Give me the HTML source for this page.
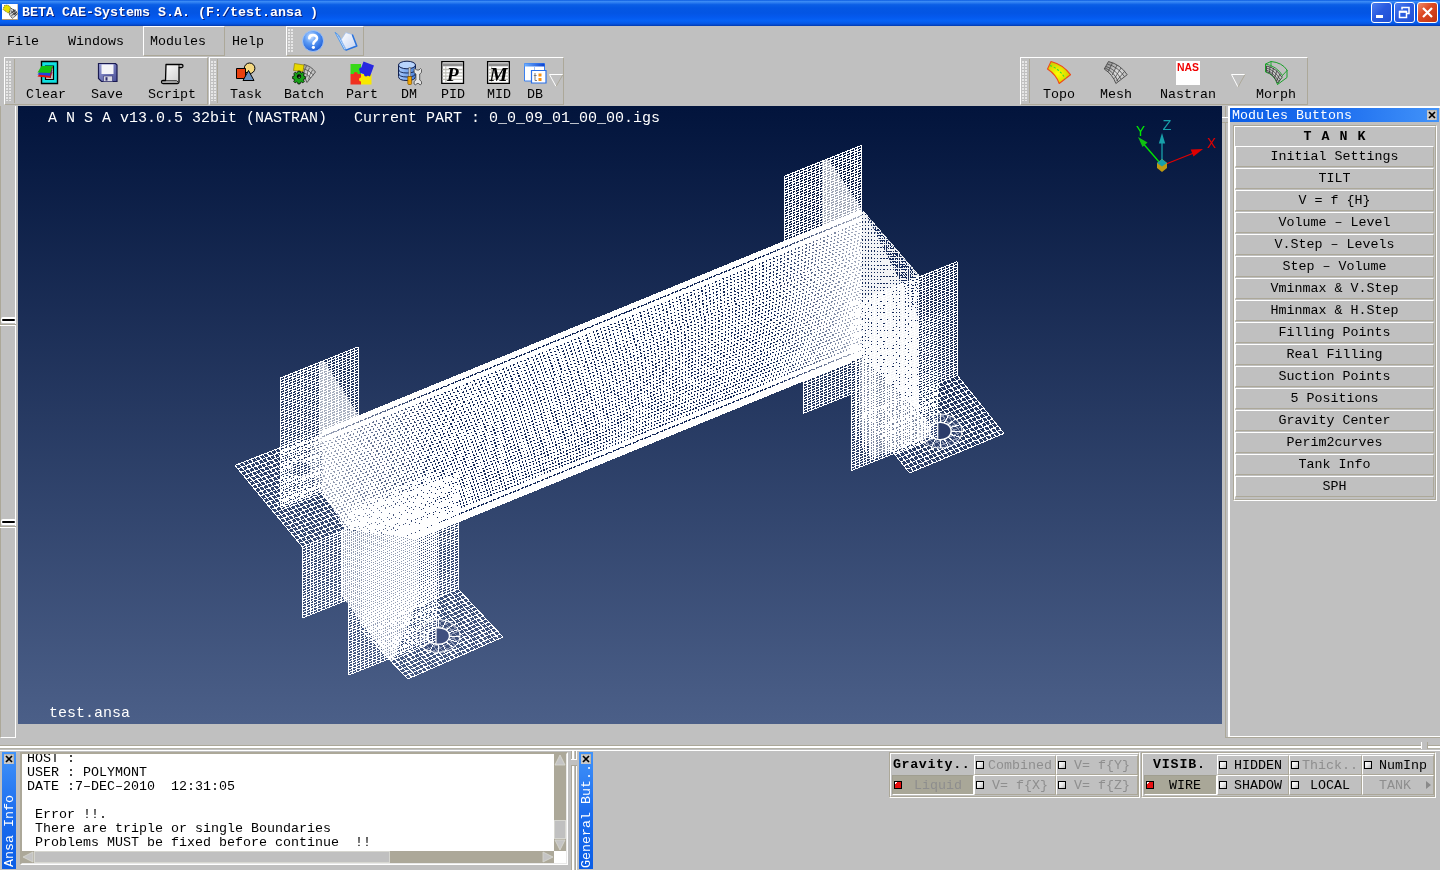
<!DOCTYPE html>
<html>
<head>
<meta charset="utf-8">
<title>BETA CAE-Systems S.A.</title>
<style>
*{box-sizing:border-box;margin:0;padding:0}
html,body{width:1440px;height:870px;overflow:hidden;background:#c0c0c0}
body{position:relative;font-family:"Liberation Mono",monospace;font-size:13.33px;color:#000;line-height:16px}
.abs{position:absolute}
.t{position:absolute;white-space:pre;line-height:16px;height:16px}
/* title bar */
#title{left:0;top:0;width:1440px;height:26px;background:linear-gradient(to bottom,#0a5be0 0%,#3c8cf6 6%,#2c7df0 10%,#0b5fe6 18%,#0457e3 30%,#0355e4 50%,#0459ee 66%,#0562f6 80%,#0558e6 90%,#0348cc 96%,#0238a8 100%)}
#title .cap{left:22px;top:5px;color:#fff;font-weight:bold;font-size:13.33px;text-shadow:1px 1px 0 #0a1f7a}
.wb{position:absolute;top:2px;width:21px;height:21px;border:1px solid #fff;border-radius:3px;background:linear-gradient(135deg,#4d7ff0 0%,#2a5be0 45%,#1f4fd4 100%)}
.wb.close{background:linear-gradient(135deg,#ee8a6a 0%,#dd4a24 40%,#c03312 100%)}
/* bevels */
.raised{border:1px solid;border-color:#fff #aca899 #aca899 #fff}
.sunken{border:1px solid;border-color:#aca899 #fff #fff #aca899}
.grip{position:absolute;width:6px;background-image:radial-gradient(circle at 1px 1px,rgba(255,255,255,.85) 0.6px,transparent 1.0px);background-size:3px 3px}
.tl{position:absolute;white-space:pre;line-height:16px;height:16px;text-align:center}
/* viewport */
#vp{left:18px;top:106px;width:1204px;height:618px;background:linear-gradient(to bottom,#02143c 0%,#4b5f88 100%);overflow:hidden}
#vp .vt{position:absolute;color:#fff;font-size:15px;white-space:pre;line-height:16px}
/* module panel */
.mb{position:absolute;left:1235px;width:199px;height:21px;border:1px solid;border-color:#fff #aca899 #aca899 #fff;text-align:center;line-height:20px;white-space:pre}
.cell{position:absolute;height:20px;border:1px solid;border-color:#fff #aca899 #aca899 #fff;white-space:pre;line-height:18px}
.cb{position:absolute;width:8px;height:8px;border:1px solid #000;background:linear-gradient(135deg,#fff 0%,#e8e8e8 50%,#b8b8b8 100%)}
.cb.red{background:linear-gradient(135deg,#fff 0%,#fff 22%,#e81010 24%,#e81010 100%)}
.dis{color:#8e8e8e}
</style>
</head>
<body>
<div id="root" style="position:absolute;left:0;top:0;width:1440px;height:870px;will-change:transform">
<!-- TITLE BAR -->
<div id="title" class="abs">
  <svg class="abs" style="left:2px;top:4px" width="16" height="16" viewBox="0 0 16 16"><rect width="16" height="16" fill="#fff"/><path d="M0 15.500h16v-15.500" fill="none" stroke="#b09878" stroke-width="1"/>
<path d="M7.500 3.500l6 3 2 3.500-5 4.500-3-3.500z" fill="#d0d0d0" stroke="#202020" stroke-width="0.800" stroke-dasharray="1.200 0.600"/>
<path d="M9 6.500l4.500 5M11 5.500l3.500 5.500M8.500 9.500l5-3.500M9.500 11.500l5.500-3.500" stroke="#202020" stroke-width="0.800" fill="none"/>
<path d="M2.500 1.500l3-.5 3 2-1 5.500-1.500.5-5-3.500z" fill="#e8e000" stroke="#303000" stroke-width="0.600" stroke-dasharray="1 0.800"/></svg>
  <div class="t cap">BETA CAE-Systems S.A. (F:/test.ansa )</div>
  <div class="wb" style="left:1371px"><div class="abs" style="left:4px;top:12px;width:7px;height:3px;background:#fff"></div></div>
  <div class="wb" style="left:1394px"><svg class="abs" style="left:0;top:0" width="19" height="19"><path d="M7 6.500v-2h7v6h-2" fill="none" stroke="#fff" stroke-width="1.500"/><path d="M4.500 8.500h7v6h-7z" fill="none" stroke="#fff" stroke-width="1.500"/><path d="M4.500 8.800h7" stroke="#fff" stroke-width="2"/></svg></div>
  <div class="wb close" style="left:1417px"><svg class="abs" style="left:0;top:0" width="19" height="19"><path d="M5 5l9 9M14 5l-9 9" stroke="#fff" stroke-width="2.200"/></svg></div>
</div>

<!-- MENU -->
<div class="t" style="left:7px;top:34px">File</div>
<div class="t" style="left:68px;top:34px">Windows</div>
<div class="abs raised" style="left:143px;top:26px;width:82px;height:30px"></div>
<div class="t" style="left:150px;top:34px">Modules</div>
<div class="t" style="left:232px;top:34px">Help</div>


<!-- help toolbar -->
<div class="abs raised" style="left:286px;top:26px;width:78px;height:30px"></div>
<div class="grip" style="left:288px;top:29px;height:24px"></div>
<svg class="abs" style="left:300px;top:29px" width="26" height="24" viewBox="0 0 26 24">
  <defs><radialGradient id="hg" cx="40%" cy="30%" r="70%"><stop offset="0" stop-color="#cfe3ff"/><stop offset="0.45" stop-color="#5b9bf5"/><stop offset="1" stop-color="#1f5fd8"/></radialGradient></defs>
  <circle cx="13" cy="12" r="10.5" fill="url(#hg)" stroke="#9cc0f4" stroke-width="1"/>
  <path d="M9.3 9.2 C9.3 5.2 17 5 17 9.3 C17 12 13.4 12 13.4 14.8" fill="none" stroke="#fff" stroke-width="2.6" stroke-linecap="round"/>
  <circle cx="13.4" cy="18.3" r="1.6" fill="#fff"/>
</svg>
<svg class="abs" style="left:330px;top:28px" width="32" height="26" viewBox="330 28 32 26">
  <defs><linearGradient id="bk" x1="0" y1="0" x2="1" y2="1"><stop offset="0" stop-color="#ffffff"/><stop offset="1" stop-color="#c4d2f0"/></linearGradient></defs>
  <path d="M335 32.300L344.300 49.800L346 49.300L338.500 35z" fill="#b8d4fa" stroke="#4a94ea" stroke-width="0.900"/>
  <path d="M338 36L341.500 39.500L346 49.500" fill="none" stroke="#7ab0f0" stroke-width="0.800"/>
  <path d="M341.300 39.500L345.800 32.600L352.300 34.600L356.300 45.800L346.300 49.600L342.500 42.500z" fill="url(#bk)" stroke="#9abcf0" stroke-width="0.700"/>
  <path d="M352.300 34.400L356.800 46L345.500 50.400" fill="none" stroke="#2a72dc" stroke-width="1.500" stroke-linejoin="round"/>
</svg>

<!-- toolbar 1 -->
<div class="abs raised" style="left:4px;top:57px;width:204px;height:48px"></div>
<div class="grip" style="left:6px;top:61px;height:40px"></div>
<div class="abs" style="left:14px;top:59px;width:1px;height:44px;background:#aca899"></div>
<div class="tl" style="top:87px;left:22px;width:48px">Clear</div>
<div class="tl" style="top:87px;left:87px;width:40px">Save</div>
<div class="tl" style="top:87px;left:144px;width:56px">Script</div>

<!-- toolbar 2 -->
<div class="abs raised" style="left:209px;top:57px;width:355px;height:48px"></div>
<div class="grip" style="left:211px;top:61px;height:40px"></div>
<div class="abs" style="left:217px;top:59px;width:1px;height:44px;background:#aca899"></div>
<div class="tl" style="top:87px;left:230px;width:32px">Task</div>
<div class="tl" style="top:87px;left:284px;width:40px">Batch</div>
<div class="tl" style="top:87px;left:346px;width:32px">Part</div>
<div class="tl" style="top:87px;left:401px;width:16px">DM</div>
<div class="tl" style="top:87px;left:441px;width:24px">PID</div>
<div class="tl" style="top:87px;left:487px;width:24px">MID</div>
<div class="tl" style="top:87px;left:527px;width:16px">DB</div>

<!-- toolbar 3 -->
<div class="abs raised" style="left:1020px;top:57px;width:288px;height:48px"></div>
<div class="grip" style="left:1022px;top:61px;height:40px"></div>
<div class="abs" style="left:1029px;top:59px;width:1px;height:44px;background:#aca899"></div>
<div class="tl" style="top:87px;left:1043px;width:32px">Topo</div>
<div class="tl" style="top:87px;left:1100px;width:32px">Mesh</div>
<div class="tl" style="top:87px;left:1160px;width:56px">Nastran</div>
<div class="tl" style="top:87px;left:1256px;width:40px">Morph</div>

<!--ICONS--><svg class="abs" style="left:0;top:57px" width="1440" height="48" viewBox="0 57 1440 48">
<defs>
<linearGradient id="gsave" x1="0" y1="0" x2="1" y2="1"><stop offset="0" stop-color="#9aa0d8"/><stop offset="1" stop-color="#4a4f98"/></linearGradient>
<linearGradient id="gscr" x1="0" y1="0" x2="1" y2="1"><stop offset="0" stop-color="#ffffff"/><stop offset="1" stop-color="#c8c8c8"/></linearGradient>
<radialGradient id="gtopo" cx="45%" cy="55%" r="60%"><stop offset="0" stop-color="#ffff00"/><stop offset="1" stop-color="#c8c800"/></radialGradient>
<radialGradient id="gmesh" cx="60%" cy="55%" r="60%"><stop offset="0" stop-color="#e8e8e8"/><stop offset="1" stop-color="#9c9c9c"/></radialGradient>
<linearGradient id="gdb" x1="0" y1="0" x2="1" y2="0"><stop offset="0" stop-color="#a8c8f8"/><stop offset="0.5" stop-color="#7aa8ee"/><stop offset="1" stop-color="#4a80d8"/></linearGradient>
<linearGradient id="gwin" x1="0" y1="0" x2="1" y2="0"><stop offset="0" stop-color="#6fb0ff"/><stop offset="1" stop-color="#0a40d0"/></linearGradient>
</defs>
<!-- Clear -->
<path d="M41.5 61.5h16v22h-16z" fill="#10e0e0" stroke="#000" stroke-width="1.4"/>
<path d="M45.5 66h8v13.5h-8z" fill="#c0c0c0" stroke="#000" stroke-width="1.2"/>
<path d="M37.5 76.5l3.5-4.5h11.5l-2 6z" fill="#e01010"/>
<path d="M37.5 74.5l3.5-4.5h11.5l-2 6z" fill="#2040e0"/>
<path d="M37.5 72.5l4-6.5h11.5l-2.5 7z" fill="#10c010"/>
<path d="M52.5 67l-2 7v4" fill="none" stroke="#802020" stroke-width="0.8"/>
<!-- Save -->
<path d="M98.5 63.5h17l1.5 1.5v16.5h-15.5l-3-3z" fill="url(#gsave)" stroke="#1a1a50" stroke-width="1.2"/>
<path d="M101.5 64.5h12v9.5h-12z" fill="#f4f4f8"/>
<path d="M103.5 76h9v5.5h-9z" fill="#d8d8e4" stroke="#303070" stroke-width="0.6"/>
<path d="M105.5 77.2h2v3.4h-2z" fill="#303070"/>
<!-- Script -->
<path d="M166 64.5h15.5q1.5 0 1.5 1.5t-1.5 1.5h-2.5v14.5q0 1.5-1.500 1.500h-14.500q-1.5 0-1.5-1.500t1.500-1.500h2.500z" fill="url(#gscr)" stroke="#000" stroke-width="1.3" stroke-linejoin="round"/>
<path d="M163 80.800h13.500q1 0 1.500 1.500" fill="none" stroke="#000" stroke-width="0.9"/>
<path d="M179 67.500v-3" stroke="#000" stroke-width="0.9"/>
<!-- Task -->
<circle cx="249.600" cy="68.300" r="5.300" fill="#f4d880" stroke="#000" stroke-width="1"/>
<path d="M236.500 68.500h9v10h-9z" fill="#e84010" stroke="#000" stroke-width="1"/>
<path d="M248.500 70.500l5.500 10h-11z" fill="#6890c0" stroke="#000" stroke-width="1"/>
<!-- Batch -->
<path d="M304 64.500q7 1.500 11.500 7.500l-8.500 10.500q-2-7-7-10z" fill="url(#gmesh)" stroke="#505050" stroke-width="0.900"/>
<path d="M306.500 66q-2.500 4-3 8.500M309.500 67.800q-2.500 4-2.700 9.500M312.500 70q-3 4.500-4 9.500M303 68.500q6 1.500 10.500 6.500M302 72q5 1.500 9 6" fill="none" stroke="#505050" stroke-width="0.800"/>
<path d="M294.500 63.500l9.500 1.500-1 6.500-9.500-1z" fill="#e8d800" stroke="#807000" stroke-width="0.600"/>
<g transform="translate(299 76.500) scale(0.82)">
<path d="M-1.300-6.500h2.600l.4 1.700 1.500.6 1.500-1 1.800 1.800-1 1.500.6 1.500 1.700.4v2.600l-1.700.4-.6 1.500 1 1.500-1.800 1.800-1.500-1-1.500.6-.4 1.700h-2.600l-.4-1.700-1.500-.6-1.500 1-1.800-1.800 1-1.500-.6-1.500-1.700-.4v-2.600l1.700-.4.600-1.500-1-1.500 1.800-1.800 1.500 1 1.500-.6z" fill="#18a018" stroke="#000" stroke-width="0.900"/>
<circle r="2.600" fill="#000"/><circle r="1.200" cx="0.300" cy="0.300" fill="#d0ffd0"/><circle r="1.100" fill="#000"/>
</g>
<!-- Part -->
<path d="M350.500 64h10.500v10h-10.500z" fill="#38d818"/>
<path d="M350.500 74h10.500v10.500h-10.500z" fill="#f03020"/>
<path d="M361 74h10.500v10.500h-10.500z" fill="#f8e800"/>
<circle cx="355.700" cy="74" r="2" fill="#f03020"/><circle cx="361" cy="79.500" r="2" fill="#f8e800"/><circle cx="366" cy="74.500" r="2" fill="#2828e0"/>
<path d="M363.500 61.500l10.500 4-4 11-10.500-4z" fill="#2828e0"/>
<circle cx="361" cy="69.500" r="1.900" fill="#2828e0"/>
<!-- DM -->
<path d="M398.500 65v11.500q0 4 8.500 4t8.500-4v-11.500z" fill="url(#gdb)" stroke="#102050" stroke-width="1"/>
<ellipse cx="407" cy="65" rx="8.500" ry="3.800" fill="#b8d4fc" stroke="#102050" stroke-width="1"/>
<path d="M398.500 69q0 4 8.500 4t8.500-4M398.500 73q0 4 8.500 4t8.500-4" fill="none" stroke="#102050" stroke-width="0.900"/>
<path d="M408.800 67.500h1.800v9h-1.800z" fill="#d8d8d8" stroke="#606060" stroke-width="0.600"/>
<path d="M407.800 76.500h3.800v7q0 1-1 1h-1.800q-1 0-1-1z" fill="#f0a800" stroke="#805000" stroke-width="0.700"/>
<path d="M415 68.500l1.500 1.500h2.500l1.500-1.500 1 1v3l-1.800 1.500v6l1.800 1.500v2.500l-1.500 1-1.200-1.500h-2l-1.200 1.500-1.500-1v-2.500l1.800-1.500v-6l-1.800-1.500v-3z" fill="#e4e4e4" stroke="#505050" stroke-width="0.900"/>
<!-- PID -->
<path d="M441.800 61.600h21.700v21.700h-21.700z" fill="#fff" stroke="#000" stroke-width="1.300"/>
<path d="M442.500 63.300h20.300v3h-20.300z" fill="#8c8c8c"/>
<path d="M442.500 69.500h20.300M442.500 72.800h20.300M442.500 76.100h20.300M442.500 79.400h20.300" stroke="#c0c0b8" stroke-width="1.300"/>
<path d="M445.800 66.300v16.500" stroke="#c0c0b8" stroke-width="1"/>
<text x="452.800" y="81.300" font-family="Liberation Serif" font-weight="bold" font-style="italic" font-size="19.500" text-anchor="middle" fill="#000">P</text>
<!-- MID -->
<path d="M487.600 61.600h21.700v21.700h-21.700z" fill="#fff" stroke="#000" stroke-width="1.300"/>
<path d="M488.300 63.300h20.300v3h-20.300z" fill="#8c8c8c"/>
<path d="M488.300 69.500h20.300M488.300 72.800h20.300M488.300 76.100h20.300M488.300 79.400h20.300" stroke="#c0c0b8" stroke-width="1.300"/>
<path d="M491.600 66.300v16.500" stroke="#c0c0b8" stroke-width="1"/>
<text x="498.600" y="81.300" font-family="Liberation Serif" font-weight="bold" font-style="italic" font-size="19" text-anchor="middle" fill="#000" textLength="18.500" lengthAdjust="spacingAndGlyphs">M</text>
<!-- DB -->
<path d="M524.500 63.500h20v17.500h-20z" fill="#fff" stroke="#3a80f0" stroke-width="1"/>
<path d="M524.500 63.500h20v3h-20z" fill="url(#gwin)"/>
<path d="M534.500 66.500v14" stroke="#9cc0f8" stroke-width="1"/>
<path d="M531.500 70.500h14.500v12.500h-14.500z" fill="#fff" stroke="#2a70e8" stroke-width="1.200"/>
<path d="M538.500 73.500h3v3h-3zM538.500 78h3v3h-3z" fill="#f89010"/>
<path d="M535 73v7.500h2M533.800 75.500h2.800" fill="none" stroke="#707070" stroke-width="0.900"/>
<!-- dropdown 1 -->
<path d="M563 74.500h-13.500l6.500 12" fill="none" stroke="#fff" stroke-width="1"/><path d="M556 86.500l7-12" fill="none" stroke="#aca899" stroke-width="1"/>
<!-- Topo -->
<path d="M1051 61.500q12 3 19.500 13.200l-11.300 8.800q-3.200-9-11.700-14.500z" fill="url(#gtopo)" stroke="#f04818" stroke-width="1.100" stroke-linejoin="round"/>
<path d="M1050 65.500q10 3.500 15.500 13.500" fill="none" stroke="#30e030" stroke-width="1.100" stroke-dasharray="2.200 1.800"/>
<!-- Mesh -->
<path d="M1108.500 61.500q12 3 18.700 13.200l-11.300 8.800q-3.200-9-11.700-14.500z" fill="url(#gmesh)" stroke="#484848" stroke-width="0.900" stroke-linejoin="round"/>
<path d="M1107.300 64q11 3 17 12.500M1106 66.500q10 3 15 12.500M1105 68q9 3.500 13 13.500M1112.500 62.800l-4.500 9M1117 65l-4.800 10M1121 68l-6.500 10.500M1124.500 71.500l-8 9.500" fill="none" stroke="#484848" stroke-width="0.800"/>
<!-- Nastran -->
<path d="M1176 61h24v24h-24z" fill="#fff"/>
<text x="1188" y="71" font-family="Liberation Sans" font-weight="bold" font-size="10.800" text-anchor="middle" fill="#f00000" textLength="22" lengthAdjust="spacingAndGlyphs">NAS</text>
<!-- dropdown 3 -->
<path d="M1245 74.500h-13.500l6.500 12.500" fill="none" stroke="#fff" stroke-width="1"/><path d="M1238 87l7-12.500" fill="none" stroke="#aca899" stroke-width="1"/>
<!-- Morph -->
<path d="M1265.500 64l5.500-2.500q11 1 16 8.500v7.500l-9.500 7q-3-10-12-12.500z" fill="none" stroke="#18a028" stroke-width="1"/>
<path d="M1265.500 64q11 2 17 11.500l5-5.500M1282.500 75.500l-5 9M1265.500 71.500l5.500-3v-7" fill="none" stroke="#18a028" stroke-width="0.900"/>
<path d="M1266.500 66q10 2 15.500 11.500l-4.500 5.500q-3.500-8.500-11-11.500z" fill="#c8c8c8" stroke="#303030" stroke-width="0.800"/>
<path d="M1266.500 68q9 2.500 13.500 11.500M1266.500 70q7.500 3 12 11M1270 66.800l-.5 6.200M1273.500 68l-1.500 7M1277 70.500l-2.500 7.500M1280 74l-3.500 7" fill="none" stroke="#303030" stroke-width="0.700"/>
</svg><!--/ICONS-->
<!-- VIEWPORT -->
<div id="vp" class="abs">
<!--MESH--><svg class="abs" style="left:0;top:0" width="1204" height="618" viewBox="18 106 1204 618" shape-rendering="crispEdges">
<defs><linearGradient id="gR" gradientUnits="userSpaceOnUse" x1="770" y1="0" x2="862" y2="0"><stop offset="0" stop-color="#fff" stop-opacity="0"/><stop offset="1" stop-color="#fff" stop-opacity="0.65"/></linearGradient><linearGradient id="gL" gradientUnits="userSpaceOnUse" x1="322" y1="0" x2="440" y2="0"><stop offset="0" stop-color="#fff" stop-opacity="0.6"/><stop offset="1" stop-color="#fff" stop-opacity="0"/></linearGradient><clipPath id="cbeam"><polygon points="322.0,430.4 862.0,209.0 862.0,357.5 417.6,539.1 346.0,529.0 322.0,492.0"/></clipPath><clipPath id="cend"><polygon points="862.0,209.0 919.0,275.0 919.0,412.0 862.0,357.0"/></clipPath><clipPath id="ctri"><polygon points="866.0,214.0 919.0,277.0 919.0,318.0"/></clipPath><clipPath id="ccl"><polygon points="342.0,529.0 417.6,539.1 417.6,601.0 394.0,658.0 391.0,662.0 349.4,606.0 342.0,596.0"/></clipPath><clipPath id="ccr"><polygon points="856.0,352.0 862.0,357.0 919.0,412.0 934.0,428.0 926.0,438.0 900.0,449.0 872.0,460.0 856.0,440.0"/></clipPath></defs>
<path d="M235.0 465.4l67.2 81.3M239.0 463.8l67.2 81.3M243.0 462.3l67.2 81.3M246.9 460.7l67.2 81.3M250.9 459.2l67.2 81.3M254.9 457.6l67.2 81.3M258.9 456.0l67.2 81.3M262.9 454.5l67.2 81.3M266.8 452.9l67.2 81.3M270.8 451.4l67.2 81.3M274.8 449.8l67.2 81.3M278.8 448.3l67.2 81.3M282.8 446.7l67.2 81.3M286.7 445.1l67.2 81.3M290.7 443.6l67.2 81.3M294.7 442.0l67.2 81.3M298.7 440.5l67.2 81.3M302.6 438.9l67.2 81.3M306.6 437.3l67.2 81.3M310.6 435.8l67.2 81.3M314.6 434.2l67.2 81.3M318.6 432.7l67.2 81.3M322.5 431.1l67.2 81.3M326.5 429.6l67.2 81.3M330.5 428.0l67.2 81.3M235.0 465.4l95.5 -37.4M237.8 468.8l95.5 -37.4M240.6 472.2l95.5 -37.4M243.4 475.6l95.5 -37.4M246.2 478.9l95.5 -37.4M249.0 482.3l95.5 -37.4M251.8 485.7l95.5 -37.4M254.6 489.1l95.5 -37.4M257.4 492.5l95.5 -37.4M260.2 495.9l95.5 -37.4M263.0 499.3l95.5 -37.4M265.8 502.7l95.5 -37.4M268.6 506.0l95.5 -37.4M271.4 509.4l95.5 -37.4M274.2 512.8l95.5 -37.4M277.0 516.2l95.5 -37.4M279.8 519.6l95.5 -37.4M282.6 523.0l95.5 -37.4M285.4 526.4l95.5 -37.4M288.2 529.8l95.5 -37.4M291.0 533.1l95.5 -37.4M293.8 536.5l95.5 -37.4M296.6 539.9l95.5 -37.4M299.4 543.3l95.5 -37.4M302.2 546.7l95.5 -37.4" fill="none" stroke="#fff" stroke-width="1"/>
<ellipse cx="301" cy="469" rx="10.5" ry="8" fill="#2d4069" stroke="#fff" stroke-width="1" shape-rendering="auto"/>
<path d="M280.5 378.0V508.0M284.4 376.4V506.4M288.3 374.9V504.9M292.2 373.3V503.3M296.1 371.8V501.8M300.0 370.2V500.2M303.9 368.7V498.7M307.8 367.1V497.1M311.7 365.5V495.5M315.6 364.0V494.0M319.4 362.4V492.4M323.3 360.9V490.9M327.2 359.3V489.3M331.1 357.7V487.7M335.0 356.2V486.2M338.9 354.6V484.6M342.8 353.1V483.1M346.7 351.5V481.5M350.6 350.0V480.0M354.5 348.4V478.4M358.4 346.8V476.8M280.5 378.0L358.4 346.8M280.5 380.6L358.4 349.4M280.5 383.2L358.4 352.0M280.5 385.8L358.4 354.6M280.5 388.4L358.4 357.2M280.5 391.0L358.4 359.8M280.5 393.6L358.4 362.4M280.5 396.2L358.4 365.0M280.5 398.8L358.4 367.6M280.5 401.4L358.4 370.2M280.5 404.0L358.4 372.8M280.5 406.6L358.4 375.4M280.5 409.2L358.4 378.0M280.5 411.8L358.4 380.6M280.5 414.4L358.4 383.2M280.5 417.0L358.4 385.8M280.5 419.6L358.4 388.4M280.5 422.2L358.4 391.0M280.5 424.8L358.4 393.6M280.5 427.4L358.4 396.2M280.5 430.0L358.4 398.8M280.5 432.6L358.4 401.4M280.5 435.2L358.4 404.0M280.5 437.8L358.4 406.6M280.5 440.4L358.4 409.2M280.5 443.0L358.4 411.8M280.5 445.6L358.4 414.4M280.5 448.2L358.4 417.0M280.5 450.8L358.4 419.6M280.5 453.4L358.4 422.2M280.5 456.0L358.4 424.8M280.5 458.6L358.4 427.4M280.5 461.2L358.4 430.0M280.5 463.8L358.4 432.6M280.5 466.4L358.4 435.2M280.5 469.0L358.4 437.8M280.5 471.6L358.4 440.4M280.5 474.2L358.4 443.0M280.5 476.8L358.4 445.6M280.5 479.4L358.4 448.2M280.5 482.0L358.4 450.8M280.5 484.6L358.4 453.4M280.5 487.2L358.4 456.0M280.5 489.8L358.4 458.6M280.5 492.4L358.4 461.2M280.5 495.0L358.4 463.8M280.5 497.6L358.4 466.4M280.5 500.2L358.4 469.0M280.5 502.8L358.4 471.6M280.5 505.4L358.4 474.2M280.5 508.0L358.4 476.8" fill="none" stroke="#fff" stroke-width="1"/>
<path d="M302.2 546.7V618.0M306.1 545.1V616.4M310.0 543.6V614.9M313.9 542.0V613.3M317.7 540.5V611.8M321.6 538.9V610.2M325.5 537.4V608.7M329.4 535.8V607.1M333.3 534.3V605.6M337.1 532.7V604.0M341.0 531.2V602.5M344.9 529.6V600.9M348.8 528.1V599.4M302.2 546.7L348.8 528.1M302.2 549.3L348.8 530.7M302.2 552.0L348.8 533.3M302.2 554.6L348.8 536.0M302.2 557.3L348.8 538.6M302.2 559.9L348.8 541.3M302.2 562.5L348.8 543.9M302.2 565.2L348.8 546.5M302.2 567.8L348.8 549.2M302.2 570.5L348.8 551.8M302.2 573.1L348.8 554.5M302.2 575.7L348.8 557.1M302.2 578.4L348.8 559.7M302.2 581.0L348.8 562.4M302.2 583.7L348.8 565.0M302.2 586.3L348.8 567.7M302.2 589.0L348.8 570.3M302.2 591.6L348.8 573.0M302.2 594.2L348.8 575.6M302.2 596.9L348.8 578.2M302.2 599.5L348.8 580.9M302.2 602.2L348.8 583.5M302.2 604.8L348.8 586.2M302.2 607.4L348.8 588.8M302.2 610.1L348.8 591.4M302.2 612.7L348.8 594.1M302.2 615.4L348.8 596.7M302.2 618.0L348.8 599.4" fill="none" stroke="#fff" stroke-width="1"/>
<polygon points="318.5,364.0 324.0,361.0 358.4,415.0 358.4,430.0 318.5,447.0" fill="#fff" opacity="0.6"/>
<path d="M784.3 176.3V306.3M788.2 174.8V304.8M792.0 173.2V303.2M795.9 171.7V301.6M799.8 170.1V300.1M803.7 168.6V298.6M807.5 167.0V297.0M811.4 165.5V295.5M815.3 163.9V293.9M819.2 162.4V292.4M823.0 160.8V290.8M826.9 159.2V289.2M830.8 157.7V287.7M834.7 156.2V286.1M838.5 154.6V284.6M842.4 153.1V283.1M846.3 151.5V281.5M850.2 150.0V280.0M854.0 148.4V278.4M857.9 146.9V276.9M861.8 145.3V275.3M784.3 176.3L861.8 145.3M784.3 178.9L861.8 147.9M784.3 181.5L861.8 150.5M784.3 184.1L861.8 153.1M784.3 186.7L861.8 155.7M784.3 189.3L861.8 158.3M784.3 191.9L861.8 160.9M784.3 194.5L861.8 163.5M784.3 197.1L861.8 166.1M784.3 199.7L861.8 168.7M784.3 202.3L861.8 171.3M784.3 204.9L861.8 173.9M784.3 207.5L861.8 176.5M784.3 210.1L861.8 179.1M784.3 212.7L861.8 181.7M784.3 215.3L861.8 184.3M784.3 217.9L861.8 186.9M784.3 220.5L861.8 189.5M784.3 223.1L861.8 192.1M784.3 225.7L861.8 194.7M784.3 228.3L861.8 197.3M784.3 230.9L861.8 199.9M784.3 233.5L861.8 202.5M784.3 236.1L861.8 205.1M784.3 238.7L861.8 207.7M784.3 241.3L861.8 210.3M784.3 243.9L861.8 212.9M784.3 246.5L861.8 215.5M784.3 249.1L861.8 218.1M784.3 251.7L861.8 220.7M784.3 254.3L861.8 223.3M784.3 256.9L861.8 225.9M784.3 259.5L861.8 228.5M784.3 262.1L861.8 231.1M784.3 264.7L861.8 233.7M784.3 267.3L861.8 236.3M784.3 269.9L861.8 238.9M784.3 272.5L861.8 241.5M784.3 275.1L861.8 244.1M784.3 277.7L861.8 246.7M784.3 280.3L861.8 249.3M784.3 282.9L861.8 251.9M784.3 285.5L861.8 254.5M784.3 288.1L861.8 257.1M784.3 290.7L861.8 259.7M784.3 293.3L861.8 262.3M784.3 295.9L861.8 264.9M784.3 298.5L861.8 267.5M784.3 301.1L861.8 270.1M784.3 303.7L861.8 272.7M784.3 306.3L861.8 275.3" fill="none" stroke="#fff" stroke-width="1"/>
<path d="M803.4 342.0V413.3M807.4 340.4V411.7M811.4 338.8V410.1M815.4 337.2V408.5M819.3 335.6V406.9M823.3 334.0V405.3M827.3 332.4V403.7M831.3 330.8V402.1M835.3 329.3V400.6M839.2 327.7V399.0M843.2 326.1V397.4M847.2 324.5V395.8M851.2 322.9V394.2M803.4 342.0L851.2 322.9M803.4 344.6L851.2 325.5M803.4 347.3L851.2 328.2M803.4 349.9L851.2 330.8M803.4 352.6L851.2 333.4M803.4 355.2L851.2 336.1M803.4 357.8L851.2 338.7M803.4 360.5L851.2 341.4M803.4 363.1L851.2 344.0M803.4 365.8L851.2 346.6M803.4 368.4L851.2 349.3M803.4 371.0L851.2 351.9M803.4 373.7L851.2 354.6M803.4 376.3L851.2 357.2M803.4 379.0L851.2 359.9M803.4 381.6L851.2 362.5M803.4 384.3L851.2 365.1M803.4 386.9L851.2 367.8M803.4 389.5L851.2 370.4M803.4 392.2L851.2 373.1M803.4 394.8L851.2 375.7M803.4 397.5L851.2 378.3M803.4 400.1L851.2 381.0M803.4 402.7L851.2 383.6M803.4 405.4L851.2 386.3M803.4 408.0L851.2 388.9M803.4 410.7L851.2 391.5M803.4 413.3L851.2 394.2" fill="none" stroke="#fff" stroke-width="1"/>
<polygon points="822.0,162.0 828.0,159.0 861.8,209.0 861.8,225.0 822.0,240.0" fill="#fff" opacity="0.6"/>
<polygon points="322.0,430.4 862.0,209.0 862.0,357.5 417.6,539.1 346.0,529.0 322.0,492.0" fill="#fff" />
<path d="M322 443.4L862 222.0" stroke="#152a5a" stroke-width="1.45" stroke-dasharray="1.50 2.40" stroke-dashoffset="0.0" fill="none" clip-path="url(#cbeam)"/>
<path d="M322 446.7L862 225.4" stroke="#152a5a" stroke-width="1.45" stroke-dasharray="1.50 2.38" stroke-dashoffset="1.4" fill="none" clip-path="url(#cbeam)"/>
<path d="M322 450.1L862 228.7" stroke="#152a5a" stroke-width="1.45" stroke-dasharray="1.50 2.36" stroke-dashoffset="2.7" fill="none" clip-path="url(#cbeam)"/>
<path d="M322 453.4L862 232.1" stroke="#152a5a" stroke-width="1.45" stroke-dasharray="1.50 2.34" stroke-dashoffset="0.3" fill="none" clip-path="url(#cbeam)"/>
<path d="M322 456.8L862 235.5" stroke="#152a5a" stroke-width="1.45" stroke-dasharray="1.50 2.32" stroke-dashoffset="1.7" fill="none" clip-path="url(#cbeam)"/>
<path d="M322 460.2L862 238.9" stroke="#152a5a" stroke-width="1.45" stroke-dasharray="1.50 2.30" stroke-dashoffset="3.1" fill="none" clip-path="url(#cbeam)"/>
<path d="M322 463.5L862 242.2" stroke="#152a5a" stroke-width="1.45" stroke-dasharray="1.50 2.28" stroke-dashoffset="0.6" fill="none" clip-path="url(#cbeam)"/>
<path d="M322 466.9L862 245.6" stroke="#152a5a" stroke-width="1.45" stroke-dasharray="1.50 2.26" stroke-dashoffset="2.0" fill="none" clip-path="url(#cbeam)"/>
<path d="M322 470.2L862 249.0" stroke="#152a5a" stroke-width="1.45" stroke-dasharray="1.50 2.24" stroke-dashoffset="3.4" fill="none" clip-path="url(#cbeam)"/>
<path d="M322 473.6L862 252.4" stroke="#152a5a" stroke-width="1.45" stroke-dasharray="1.50 2.23" stroke-dashoffset="0.9" fill="none" clip-path="url(#cbeam)"/>
<path d="M322 476.9L862 255.7" stroke="#152a5a" stroke-width="1.45" stroke-dasharray="1.50 2.21" stroke-dashoffset="2.3" fill="none" clip-path="url(#cbeam)"/>
<path d="M322 480.3L862 259.1" stroke="#152a5a" stroke-width="1.45" stroke-dasharray="1.50 2.19" stroke-dashoffset="3.7" fill="none" clip-path="url(#cbeam)"/>
<path d="M322 483.6L862 262.5" stroke="#152a5a" stroke-width="1.45" stroke-dasharray="1.50 2.17" stroke-dashoffset="1.2" fill="none" clip-path="url(#cbeam)"/>
<path d="M322 487.0L862 265.9" stroke="#152a5a" stroke-width="1.45" stroke-dasharray="1.50 2.15" stroke-dashoffset="2.6" fill="none" clip-path="url(#cbeam)"/>
<path d="M322 490.3L862 269.2" stroke="#152a5a" stroke-width="1.45" stroke-dasharray="1.50 2.13" stroke-dashoffset="0.2" fill="none" clip-path="url(#cbeam)"/>
<path d="M322 493.7L862 272.6" stroke="#152a5a" stroke-width="1.45" stroke-dasharray="1.50 2.11" stroke-dashoffset="1.6" fill="none" clip-path="url(#cbeam)"/>
<path d="M322 497.1L862 276.0" stroke="#152a5a" stroke-width="1.45" stroke-dasharray="1.50 2.09" stroke-dashoffset="2.9" fill="none" clip-path="url(#cbeam)"/>
<path d="M322 500.4L862 279.4" stroke="#152a5a" stroke-width="1.45" stroke-dasharray="1.50 2.07" stroke-dashoffset="0.5" fill="none" clip-path="url(#cbeam)"/>
<path d="M322 503.8L862 282.7" stroke="#152a5a" stroke-width="1.45" stroke-dasharray="1.50 2.05" stroke-dashoffset="1.9" fill="none" clip-path="url(#cbeam)"/>
<path d="M322 507.1L862 286.1" stroke="#152a5a" stroke-width="1.45" stroke-dasharray="1.50 2.03" stroke-dashoffset="3.2" fill="none" clip-path="url(#cbeam)"/>
<path d="M322 510.5L862 289.5" stroke="#152a5a" stroke-width="1.45" stroke-dasharray="1.50 2.01" stroke-dashoffset="0.8" fill="none" clip-path="url(#cbeam)"/>
<path d="M322 513.8L862 292.9" stroke="#152a5a" stroke-width="1.45" stroke-dasharray="1.50 1.99" stroke-dashoffset="2.2" fill="none" clip-path="url(#cbeam)"/>
<path d="M322 517.2L862 296.2" stroke="#152a5a" stroke-width="1.45" stroke-dasharray="1.50 1.97" stroke-dashoffset="3.5" fill="none" clip-path="url(#cbeam)"/>
<path d="M322 520.5L862 299.6" stroke="#152a5a" stroke-width="1.45" stroke-dasharray="1.50 1.95" stroke-dashoffset="1.1" fill="none" clip-path="url(#cbeam)"/>
<path d="M322 523.9L862 303.0" stroke="#152a5a" stroke-width="1.45" stroke-dasharray="1.50 1.93" stroke-dashoffset="2.5" fill="none" clip-path="url(#cbeam)"/>
<path d="M322 527.2L862 306.4" stroke="#152a5a" stroke-width="1.45" stroke-dasharray="1.50 1.91" stroke-dashoffset="0.1" fill="none" clip-path="url(#cbeam)"/>
<path d="M322 530.6L862 309.7" stroke="#152a5a" stroke-width="1.45" stroke-dasharray="1.50 1.89" stroke-dashoffset="1.4" fill="none" clip-path="url(#cbeam)"/>
<path d="M322 534.0L862 313.1" stroke="#152a5a" stroke-width="1.45" stroke-dasharray="1.50 1.88" stroke-dashoffset="2.8" fill="none" clip-path="url(#cbeam)"/>
<path d="M322 537.3L862 316.5" stroke="#152a5a" stroke-width="1.45" stroke-dasharray="1.50 1.86" stroke-dashoffset="0.4" fill="none" clip-path="url(#cbeam)"/>
<path d="M322 540.7L862 319.9" stroke="#152a5a" stroke-width="1.45" stroke-dasharray="1.50 1.84" stroke-dashoffset="1.7" fill="none" clip-path="url(#cbeam)"/>
<path d="M322 544.0L862 323.2" stroke="#152a5a" stroke-width="1.45" stroke-dasharray="1.50 1.82" stroke-dashoffset="3.1" fill="none" clip-path="url(#cbeam)"/>
<path d="M322 547.4L862 326.6" stroke="#152a5a" stroke-width="1.45" stroke-dasharray="1.50 1.80" stroke-dashoffset="0.7" fill="none" clip-path="url(#cbeam)"/>
<path d="M322 550.7L862 330.0" stroke="#152a5a" stroke-width="1.45" stroke-dasharray="1.50 1.78" stroke-dashoffset="2.0" fill="none" clip-path="url(#cbeam)"/>
<path d="M322 554.1L862 333.4" stroke="#152a5a" stroke-width="1.45" stroke-dasharray="1.50 1.76" stroke-dashoffset="3.4" fill="none" clip-path="url(#cbeam)"/>
<path d="M322 557.4L862 336.8" stroke="#152a5a" stroke-width="1.45" stroke-dasharray="1.50 1.74" stroke-dashoffset="1.0" fill="none" clip-path="url(#cbeam)"/>
<path d="M322 560.8L862 340.1" stroke="#152a5a" stroke-width="1.45" stroke-dasharray="1.50 1.72" stroke-dashoffset="2.4" fill="none" clip-path="url(#cbeam)"/>
<path d="M322 564.1L862 343.5" stroke="#152a5a" stroke-width="1.45" stroke-dasharray="1.50 1.70" stroke-dashoffset="3.7" fill="none" clip-path="url(#cbeam)"/>
<path d="M322 436.9L862 215.5" stroke="#152a5a" stroke-width="1.3" stroke-dasharray="3.2 0.9" fill="none" clip-path="url(#cbeam)"/>
<path d="M322 570.1L862 349.5" stroke="#152a5a" stroke-width="1.3" stroke-dasharray="3.2 1.1" fill="none" clip-path="url(#cbeam)"/>
<polygon points="770.0,246.7 862.0,209.0 862.0,357.5 770.0,395.1" fill="url(#gR)" />
<polygon points="322.0,430.4 440.0,382.0 440.0,529.9 417.6,539.1 346.0,529.0 322.0,492.0" fill="url(#gL)" />
<polygon points="310.0,445.0 322.0,430.4 322.0,492.0 316.0,484.0 310.0,470.0" fill="#fff" opacity="0.3"/>
<polygon points="862.0,209.0 919.0,275.0 919.0,412.0 862.0,357.0" fill="#fff" opacity="0.95"/>
<path d="M862 189.0l57 68M862 192.6l57 68M862 196.2l57 68M862 199.8l57 68M862 203.4l57 68M862 207.0l57 68M862 210.6l57 68M862 214.2l57 68M862 217.8l57 68M862 221.4l57 68M862 225.0l57 68M862 228.6l57 68M862 232.2l57 68M862 235.8l57 68M862 239.4l57 68M862 243.0l57 68M862 246.6l57 68M862 250.2l57 68M862 253.8l57 68M862 257.4l57 68M862 261.0l57 68M862 264.6l57 68M862 268.2l57 68M862 271.8l57 68M862 275.4l57 68M862 279.0l57 68M862 282.6l57 68M862 286.2l57 68M862 289.8l57 68M862 293.4l57 68M862 297.0l57 68M862 300.6l57 68M862 304.2l57 68M862 307.8l57 68M862 311.4l57 68M862 315.0l57 68M862 318.6l57 68M862 322.2l57 68M862 325.8l57 68M862 329.4l57 68M862 333.0l57 68M862 336.6l57 68M862 340.2l57 68M862 343.8l57 68M862 347.4l57 68M862 351.0l57 68M862 354.6l57 68M862 358.2l57 68M862 361.8l57 68M862 365.4l57 68M862 369.0l57 68M862 372.6l57 68M862 376.2l57 68M862 379.8l57 68M862 383.4l57 68M862 387.0l57 68M862 390.6l57 68M862 394.2l57 68M862 397.8l57 68M862 401.4l57 68M862 405.0l57 68M862 408.6l57 68M862 412.2l57 68M862 415.8l57 68M862 419.4l57 68M862 423.0l57 68M862 426.6l57 68M862 430.2l57 68M862 433.8l57 68M862 437.4l57 68M862 441.0l57 68M862 444.6l57 68M862 448.2l57 68M862 451.8l57 68M862 455.4l57 68M862 459.0l57 68M862 462.6l57 68M862 466.2l57 68M862 469.8l57 68M862 473.4l57 68" stroke="#152a5a" stroke-width="1.1" stroke-dasharray="1.2 3.6" fill="none" clip-path="url(#cend)"/>
<path d="M862 179.0l57 68M862 181.7l57 68M862 184.4l57 68M862 187.1l57 68M862 189.8l57 68M862 192.5l57 68M862 195.2l57 68M862 197.9l57 68M862 200.6l57 68M862 203.3l57 68M862 206.0l57 68M862 208.7l57 68M862 211.4l57 68M862 214.1l57 68M862 216.8l57 68M862 219.5l57 68M862 222.2l57 68M862 224.9l57 68M862 227.6l57 68M862 230.3l57 68M862 233.0l57 68M862 235.7l57 68M862 238.4l57 68M862 241.1l57 68M862 243.8l57 68M862 246.5l57 68M862 249.2l57 68M862 251.9l57 68M862 254.6l57 68M862 257.3l57 68M862 260.0l57 68M862 262.7l57 68M862 265.4l57 68M862 268.1l57 68M862 270.8l57 68M862 273.5l57 68M862 276.2l57 68M862 278.9l57 68M862 281.6l57 68M862 284.3l57 68" stroke="#152a5a" stroke-width="1.3" stroke-dasharray="1.7 1.7" fill="none" clip-path="url(#ctri)"/>
<path d="M362.7 631.0l45.0 48.0M366.7 629.2l45.0 48.0M370.6 627.5l45.0 48.0M374.6 625.8l45.0 48.0M378.6 624.0l45.0 48.0M382.6 622.2l45.0 48.0M386.5 620.5l45.0 48.0M390.5 618.8l45.0 48.0M394.5 617.0l45.0 48.0M398.4 615.2l45.0 48.0M402.4 613.5l45.0 48.0M406.4 611.8l45.0 48.0M410.3 610.0l45.0 48.0M414.3 608.2l45.0 48.0M418.3 606.5l45.0 48.0M422.3 604.8l45.0 48.0M426.2 603.0l45.0 48.0M430.2 601.2l45.0 48.0M434.2 599.5l45.0 48.0M438.1 597.8l45.0 48.0M442.1 596.0l45.0 48.0M446.1 594.2l45.0 48.0M450.1 592.5l45.0 48.0M454.0 590.8l45.0 48.0M458.0 589.0l45.0 48.0M362.7 631.0l95.3 -42.0M365.5 634.0l95.3 -42.0M368.3 637.0l95.3 -42.0M371.1 640.0l95.3 -42.0M373.9 643.0l95.3 -42.0M376.8 646.0l95.3 -42.0M379.6 649.0l95.3 -42.0M382.4 652.0l95.3 -42.0M385.2 655.0l95.3 -42.0M388.0 658.0l95.3 -42.0M390.8 661.0l95.3 -42.0M393.6 664.0l95.3 -42.0M396.4 667.0l95.3 -42.0M399.3 670.0l95.3 -42.0M402.1 673.0l95.3 -42.0M404.9 676.0l95.3 -42.0M407.7 679.0l95.3 -42.0" fill="none" stroke="#fff" stroke-width="1"/>
<ellipse cx="438" cy="636" rx="22" ry="16.4" fill="#3d4d7a" opacity="0.55" shape-rendering="auto"/>
<path d="M449.0 636.0L460.0 636.0M448.2 639.1L458.3 642.3M445.8 641.8L453.6 647.6M442.2 643.6L446.4 651.2M438.0 644.2L438.0 652.4M433.8 643.6L429.6 651.2M430.2 641.8L422.4 647.6M427.8 639.1L417.7 642.3M427.0 636.0L416.0 636.0M427.8 632.9L417.7 629.7M430.2 630.2L422.4 624.4M433.8 628.4L429.6 620.8M438.0 627.8L438.0 619.6M442.2 628.4L446.4 620.8M445.8 630.2L453.6 624.4M448.2 632.9L458.3 629.7" fill="none" stroke="#fff" stroke-width="1"/>
<ellipse cx="438" cy="636" rx="22" ry="16.4" fill="none" stroke="#fff" stroke-width="1" shape-rendering="auto"/>
<ellipse cx="438" cy="636" rx="11" ry="8.2" fill="#3a4a78" stroke="#fff" stroke-width="1.6" shape-rendering="auto"/>
<path d="M362.7 513.1V627.1M366.7 511.5V625.5M370.6 509.9V623.9M374.6 508.3V622.3M378.6 506.7V620.7M382.6 505.2V619.2M386.5 503.6V617.6M390.5 502.0V616.0M394.5 500.4V614.4M398.4 498.8V612.8M402.4 497.2V611.2M406.4 495.6V609.6M410.4 494.0V608.0M414.3 492.5V606.5M418.3 490.9V604.9M422.3 489.3V603.3M426.2 487.7V601.7M430.2 486.1V600.1M434.2 484.5V598.5M438.1 482.9V596.9M442.1 481.3V595.3M446.1 479.7V593.7M450.1 478.2V592.2M454.0 476.6V590.6M458.0 475.0V589.0M362.7 513.1L458.0 475.0M362.7 515.7L458.0 477.6M362.7 518.3L458.0 480.2M362.7 520.9L458.0 482.8M362.7 523.5L458.0 485.3M362.7 526.1L458.0 487.9M362.7 528.6L458.0 490.5M362.7 531.2L458.0 493.1M362.7 533.8L458.0 495.7M362.7 536.4L458.0 498.3M362.7 539.0L458.0 500.9M362.7 541.6L458.0 503.5M362.7 544.2L458.0 506.1M362.7 546.8L458.0 508.7M362.7 549.4L458.0 511.3M362.7 552.0L458.0 513.8M362.7 554.6L458.0 516.4M362.7 557.1L458.0 519.0M362.7 559.7L458.0 521.6M362.7 562.3L458.0 524.2M362.7 564.9L458.0 526.8M362.7 567.5L458.0 529.4M362.7 570.1L458.0 532.0M362.7 572.7L458.0 534.6M362.7 575.3L458.0 537.2M362.7 577.9L458.0 539.8M362.7 580.5L458.0 542.3M362.7 583.1L458.0 544.9M362.7 585.6L458.0 547.5M362.7 588.2L458.0 550.1M362.7 590.8L458.0 552.7M362.7 593.4L458.0 555.3M362.7 596.0L458.0 557.9M362.7 598.6L458.0 560.5M362.7 601.2L458.0 563.1M362.7 603.8L458.0 565.7M362.7 606.4L458.0 568.3M362.7 609.0L458.0 570.8M362.7 611.6L458.0 573.4M362.7 614.1L458.0 576.0M362.7 616.7L458.0 578.6M362.7 619.3L458.0 581.2M362.7 621.9L458.0 583.8M362.7 624.5L458.0 586.4M362.7 627.1L458.0 589.0" fill="none" stroke="#fff" stroke-width="1"/>
<path d="M348.8 508.4V675.0M352.8 506.8V673.4M356.7 505.2V671.8M360.7 503.6V670.2M364.7 502.1V668.7M368.6 500.5V667.1M372.6 498.9V665.5M376.5 497.3V663.9M380.5 495.7V662.3M384.5 494.1V660.7M388.4 492.5V659.1M392.4 491.0V657.6M396.4 489.4V656.0M400.3 487.8V654.4M404.3 486.2V652.8M408.3 484.6V651.2M412.2 483.0V649.6M416.2 481.4V648.0M420.1 479.9V646.5M424.1 478.3V644.9M428.1 476.7V643.3M432.0 475.1V641.7M436.0 473.5V640.1M348.8 508.4L436.0 473.5M348.8 511.0L436.0 476.1M348.8 513.6L436.0 478.7M348.8 516.2L436.0 481.3M348.8 518.8L436.0 483.9M348.8 521.4L436.0 486.5M348.8 524.0L436.0 489.1M348.8 526.6L436.0 491.7M348.8 529.2L436.0 494.3M348.8 531.8L436.0 496.9M348.8 534.4L436.0 499.6M348.8 537.0L436.0 502.2M348.8 539.6L436.0 504.8M348.8 542.2L436.0 507.4M348.8 544.8L436.0 510.0M348.8 547.4L436.0 512.6M348.8 550.0L436.0 515.2M348.8 552.7L436.0 517.8M348.8 555.3L436.0 520.4M348.8 557.9L436.0 523.0M348.8 560.5L436.0 525.6M348.8 563.1L436.0 528.2M348.8 565.7L436.0 530.8M348.8 568.3L436.0 533.4M348.8 570.9L436.0 536.0M348.8 573.5L436.0 538.6M348.8 576.1L436.0 541.2M348.8 578.7L436.0 543.8M348.8 581.3L436.0 546.4M348.8 583.9L436.0 549.0M348.8 586.5L436.0 551.6M348.8 589.1L436.0 554.2M348.8 591.7L436.0 556.8M348.8 594.3L436.0 559.4M348.8 596.9L436.0 562.0M348.8 599.5L436.0 564.6M348.8 602.1L436.0 567.2M348.8 604.7L436.0 569.8M348.8 607.3L436.0 572.4M348.8 609.9L436.0 575.0M348.8 612.5L436.0 577.6M348.8 615.1L436.0 580.2M348.8 617.7L436.0 582.9M348.8 620.3L436.0 585.5M348.8 622.9L436.0 588.1M348.8 625.5L436.0 590.7M348.8 628.1L436.0 593.3M348.8 630.7L436.0 595.9M348.8 633.3L436.0 598.5M348.8 636.0L436.0 601.1M348.8 638.6L436.0 603.7M348.8 641.2L436.0 606.3M348.8 643.8L436.0 608.9M348.8 646.4L436.0 611.5M348.8 649.0L436.0 614.1M348.8 651.6L436.0 616.7M348.8 654.2L436.0 619.3M348.8 656.8L436.0 621.9M348.8 659.4L436.0 624.5M348.8 662.0L436.0 627.1M348.8 664.6L436.0 629.7M348.8 667.2L436.0 632.3M348.8 669.8L436.0 634.9M348.8 672.4L436.0 637.5M348.8 675.0L436.0 640.1" fill="none" stroke="#fff" stroke-width="1"/>
<path d="M342.0 500V670M344.0 500V670M346.0 500V670M348.0 500V670M350.0 500V670M352.0 500V670M354.0 500V670M356.0 500V670M358.0 500V670M360.0 500V670M362.0 500V670M364.0 500V670M366.0 500V670M368.0 500V670M370.0 500V670M372.0 500V670M374.0 500V670M376.0 500V670M378.0 500V670M380.0 500V670M382.0 500V670M384.0 500V670M386.0 500V670M388.0 500V670M390.0 500V670M392.0 500V670M394.0 500V670M396.0 500V670M398.0 500V670M400.0 500V670M402.0 500V670M404.0 500V670M406.0 500V670M408.0 500V670M410.0 500V670M412.0 500V670M414.0 500V670M416.0 500V670M418.0 500V670" fill="none" stroke="#fff" stroke-width="1" clip-path="url(#ccl)"/>
<polygon points="342.0,529.0 417.6,539.1 417.6,601.0 394.0,658.0 391.0,662.0 349.4,606.0 342.0,596.0" fill="#fff" opacity="0.45"/>
<path d="M863.0 415.0l46.6 57.9M866.9 413.4l46.6 57.9M870.9 411.7l46.6 57.9M874.8 410.1l46.6 57.9M878.7 408.4l46.6 57.9M882.7 406.8l46.6 57.9M886.6 405.1l46.6 57.9M890.5 403.5l46.6 57.9M894.5 401.8l46.6 57.9M898.4 400.2l46.6 57.9M902.3 398.5l46.6 57.9M906.3 396.9l46.6 57.9M910.2 395.2l46.6 57.9M914.1 393.6l46.6 57.9M918.1 392.0l46.6 57.9M922.0 390.3l46.6 57.9M925.9 388.7l46.6 57.9M929.9 387.0l46.6 57.9M933.8 385.4l46.6 57.9M937.7 383.7l46.6 57.9M941.7 382.1l46.6 57.9M945.6 380.4l46.6 57.9M949.5 378.8l46.6 57.9M953.5 377.1l46.6 57.9M957.4 375.5l46.6 57.9M863.0 415.0l94.4 -39.5M865.9 418.6l94.4 -39.5M868.8 422.2l94.4 -39.5M871.7 425.9l94.4 -39.5M874.6 429.5l94.4 -39.5M877.6 433.1l94.4 -39.5M880.5 436.7l94.4 -39.5M883.4 440.3l94.4 -39.5M886.3 443.9l94.4 -39.5M889.2 447.6l94.4 -39.5M892.1 451.2l94.4 -39.5M895.0 454.8l94.4 -39.5M898.0 458.4l94.4 -39.5M900.9 462.0l94.4 -39.5M903.8 465.7l94.4 -39.5M906.7 469.3l94.4 -39.5M909.6 472.9l94.4 -39.5" fill="none" stroke="#fff" stroke-width="1"/>
<ellipse cx="940" cy="431" rx="22" ry="17.0" fill="#3d4d7a" opacity="0.55" shape-rendering="auto"/>
<path d="M951.0 431.0L962.0 431.0M950.2 434.3L960.3 437.5M947.8 437.0L955.6 443.0M944.2 438.9L948.4 446.7M940.0 439.5L940.0 448.0M935.8 438.9L931.6 446.7M932.2 437.0L924.4 443.0M929.8 434.3L919.7 437.5M929.0 431.0L918.0 431.0M929.8 427.7L919.7 424.5M932.2 425.0L924.4 419.0M935.8 423.1L931.6 415.3M940.0 422.5L940.0 414.0M944.2 423.1L948.4 415.3M947.8 425.0L955.6 419.0M950.2 427.7L960.3 424.5" fill="none" stroke="#fff" stroke-width="1"/>
<ellipse cx="940" cy="431" rx="22" ry="17.0" fill="none" stroke="#fff" stroke-width="1" shape-rendering="auto"/>
<ellipse cx="940" cy="431" rx="11" ry="8.5" fill="#3a4a78" stroke="#fff" stroke-width="1.6" shape-rendering="auto"/>
<path d="M863.0 299.4V413.4M866.9 297.8V411.8M870.9 296.3V410.3M874.8 294.7V408.7M878.7 293.1V407.1M882.7 291.5V405.5M886.6 290.0V404.0M890.5 288.4V402.4M894.5 286.8V400.8M898.4 285.2V399.2M902.3 283.7V397.7M906.3 282.1V396.1M910.2 280.5V394.5M914.1 278.9V392.9M918.1 277.4V391.4M922.0 275.8V389.8M925.9 274.2V388.2M929.9 272.7V386.7M933.8 271.1V385.1M937.7 269.5V383.5M941.7 267.9V381.9M945.6 266.4V380.4M949.5 264.8V378.8M953.5 263.2V377.2M957.4 261.6V375.6M863.0 299.4L957.4 261.6M863.0 302.0L957.4 264.2M863.0 304.6L957.4 266.8M863.0 307.2L957.4 269.4M863.0 309.8L957.4 272.0M863.0 312.4L957.4 274.6M863.0 314.9L957.4 277.2M863.0 317.5L957.4 279.8M863.0 320.1L957.4 282.4M863.0 322.7L957.4 285.0M863.0 325.3L957.4 287.5M863.0 327.9L957.4 290.1M863.0 330.5L957.4 292.7M863.0 333.1L957.4 295.3M863.0 335.7L957.4 297.9M863.0 338.3L957.4 300.5M863.0 340.9L957.4 303.1M863.0 343.4L957.4 305.7M863.0 346.0L957.4 308.3M863.0 348.6L957.4 310.9M863.0 351.2L957.4 313.5M863.0 353.8L957.4 316.0M863.0 356.4L957.4 318.6M863.0 359.0L957.4 321.2M863.0 361.6L957.4 323.8M863.0 364.2L957.4 326.4M863.0 366.8L957.4 329.0M863.0 369.4L957.4 331.6M863.0 371.9L957.4 334.2M863.0 374.5L957.4 336.8M863.0 377.1L957.4 339.4M863.0 379.7L957.4 342.0M863.0 382.3L957.4 344.5M863.0 384.9L957.4 347.1M863.0 387.5L957.4 349.7M863.0 390.1L957.4 352.3M863.0 392.7L957.4 354.9M863.0 395.3L957.4 357.5M863.0 397.9L957.4 360.1M863.0 400.4L957.4 362.7M863.0 403.0L957.4 365.3M863.0 405.6L957.4 367.9M863.0 408.2L957.4 370.5M863.0 410.8L957.4 373.0M863.0 413.4L957.4 375.6" fill="none" stroke="#fff" stroke-width="1"/>
<path d="M851.2 304.0V470.6M855.1 302.4V469.0M859.1 300.9V467.5M863.0 299.3V465.9M866.9 297.7V464.3M870.9 296.1V462.7M874.8 294.6V461.2M878.7 293.0V459.6M882.7 291.4V458.0M886.6 289.8V456.4M890.5 288.3V454.9M894.5 286.7V453.3M898.4 285.1V451.7M902.3 283.6V450.2M906.2 282.0V448.6M910.2 280.4V447.0M914.1 278.8V445.4M918.0 277.3V443.9M922.0 275.7V442.3M925.9 274.1V440.7M929.8 272.5V439.1M933.8 271.0V437.6M937.7 269.4V436.0M851.2 304.0L937.7 269.4M851.2 306.6L937.7 272.0M851.2 309.2L937.7 274.6M851.2 311.8L937.7 277.2M851.2 314.4L937.7 279.8M851.2 317.0L937.7 282.4M851.2 319.6L937.7 285.0M851.2 322.2L937.7 287.6M851.2 324.8L937.7 290.2M851.2 327.4L937.7 292.8M851.2 330.0L937.7 295.4M851.2 332.6L937.7 298.0M851.2 335.2L937.7 300.6M851.2 337.8L937.7 303.2M851.2 340.4L937.7 305.8M851.2 343.0L937.7 308.4M851.2 345.6L937.7 311.0M851.2 348.3L937.7 313.7M851.2 350.9L937.7 316.3M851.2 353.5L937.7 318.9M851.2 356.1L937.7 321.5M851.2 358.7L937.7 324.1M851.2 361.3L937.7 326.7M851.2 363.9L937.7 329.3M851.2 366.5L937.7 331.9M851.2 369.1L937.7 334.5M851.2 371.7L937.7 337.1M851.2 374.3L937.7 339.7M851.2 376.9L937.7 342.3M851.2 379.5L937.7 344.9M851.2 382.1L937.7 347.5M851.2 384.7L937.7 350.1M851.2 387.3L937.7 352.7M851.2 389.9L937.7 355.3M851.2 392.5L937.7 357.9M851.2 395.1L937.7 360.5M851.2 397.7L937.7 363.1M851.2 400.3L937.7 365.7M851.2 402.9L937.7 368.3M851.2 405.5L937.7 370.9M851.2 408.1L937.7 373.5M851.2 410.7L937.7 376.1M851.2 413.3L937.7 378.7M851.2 415.9L937.7 381.3M851.2 418.5L937.7 383.9M851.2 421.1L937.7 386.5M851.2 423.7L937.7 389.1M851.2 426.3L937.7 391.7M851.2 428.9L937.7 394.3M851.2 431.6L937.7 397.0M851.2 434.2L937.7 399.6M851.2 436.8L937.7 402.2M851.2 439.4L937.7 404.8M851.2 442.0L937.7 407.4M851.2 444.6L937.7 410.0M851.2 447.2L937.7 412.6M851.2 449.8L937.7 415.2M851.2 452.4L937.7 417.8M851.2 455.0L937.7 420.4M851.2 457.6L937.7 423.0M851.2 460.2L937.7 425.6M851.2 462.8L937.7 428.2M851.2 465.4L937.7 430.8M851.2 468.0L937.7 433.4M851.2 470.6L937.7 436.0" fill="none" stroke="#fff" stroke-width="1"/>
<path d="M852.8 340V480M856.0 340V480M859.3 340V480M862.5 340V480M865.8 340V480M869.0 340V480M872.3 340V480M875.5 340V480M878.8 340V480M882.0 340V480M885.3 340V480M888.5 340V480M891.8 340V480M895.0 340V480M898.3 340V480M901.5 340V480M904.8 340V480M908.0 340V480M911.3 340V480M914.5 340V480M917.8 340V480M921.0 340V480M924.3 340V480M927.5 340V480M930.8 340V480M934.0 340V480" fill="none" stroke="#fff" stroke-width="1" clip-path="url(#ccr)"/>
<polygon points="860.0,357.0 919.0,412.0 930.0,428.0 922.0,438.0 900.0,447.0 874.0,457.0 860.0,430.0" fill="#fff" opacity="0.38"/>
<path d="M937.7 422.6A11 8.6 0 1 1 937.7 439.4z" fill="#2b3b6a" stroke="#fff" stroke-width="1.2" shape-rendering="auto"/>
<path d="M436 628A11 8.2 0 1 1 436 644z" fill="#404f7e" stroke="#fff" stroke-width="1.2" shape-rendering="auto"/>
</svg><!--/MESH-->
<svg class="abs" style="left:1102px;top:4px" width="100" height="75" viewBox="1120 110 100 75">
<path d="M1162 162V140" stroke="#18a0aa" stroke-width="1.3"/><path d="M1162 133l3.2 10.5h-6.4z" fill="#18a0aa"/>
<path d="M1160 163L1141 141" stroke="#00e800" stroke-width="1.3"/><path d="M1138 137l9.5 5.5-5 4.5z" fill="#10c010"/>
<path d="M1166 164L1195 152.5" stroke="#e00000" stroke-width="1.3"/><path d="M1203 149l-9.5 7.5-2.8-7z" fill="#e00000"/>
<path d="M1157 163l5-4 5 4v5l-5 4-5-4z" fill="#c09a10"/><path d="M1157 163l5-4 5 4-5 3.5z" fill="#18a0aa"/>
<text x="1162.5" y="130" font-family="Liberation Mono" font-size="15" fill="#18a0aa">Z</text>
<text x="1136" y="135.5" font-family="Liberation Mono" font-size="15" fill="#00e800">Y</text>
<text x="1207" y="148" font-family="Liberation Mono" font-size="15" fill="#e00000">X</text>
</svg>
  <div class="vt" style="left:30px;top:5px">A N S A v13.0.5 32bit (NASTRAN)   Current PART : 0_0_09_01_00_00.igs</div>
  <div class="vt" style="left:31px;top:600px">test.ansa</div>
</div>

<!-- MODULE PANEL -->
<div class="abs" style="left:1225px;top:106px;width:215px;height:632px;border-left:1px solid #aca899;border-bottom:1px solid #aca899"></div>
<div class="abs" style="left:1228px;top:106px;width:212px;height:631px;border-left:2px solid #fff;border-top:2px solid #fff;border-bottom:1px solid #fff"></div>
<div class="abs" style="left:1222px;top:117px;width:6px;height:6px;background:#c0c0c0;border-top:1px solid #fff;border-bottom:1px solid #aca899"></div>
<div class="abs" style="left:1230px;top:108px;width:209px;height:14px;background:linear-gradient(to right,#0a5de6 0%,#1d6eef 50%,#4293f9 100%)"></div>
<div class="t" style="left:1232px;top:108px;color:#fff">Modules Buttons</div>
<svg class="abs" style="left:1427px;top:110px" width="10" height="10"><rect width="10" height="10" fill="#c8c8c8"/><path d="M0 0H10V10" fill="none" stroke="#aca899"/><path d="M2 2 L8 8 M8 2 L2 8" stroke="#000" stroke-width="1.7"/></svg>
<div class="abs" style="left:1233px;top:125px;width:204px;height:376px;border:1px solid;border-color:#aca899 #fff #fff #aca899"></div>
<div class="abs" style="left:1234px;top:126px;width:202px;height:374px;border:1px solid;border-color:#fff #aca899 #aca899 #fff"></div>
<div class="t" style="left:1235px;top:129px;width:199px;text-align:center;font-weight:bold;letter-spacing:1px;padding-left:1px">T A N K</div>
<div class="mb" style="top:146px">Initial Settings</div>
<div class="mb" style="top:168px">TILT</div>
<div class="mb" style="top:190px">V = f {H}</div>
<div class="mb" style="top:212px">Volume – Level</div>
<div class="mb" style="top:234px">V.Step – Levels</div>
<div class="mb" style="top:256px">Step – Volume</div>
<div class="mb" style="top:278px">Vminmax &amp; V.Step</div>
<div class="mb" style="top:300px">Hminmax &amp; H.Step</div>
<div class="mb" style="top:322px">Filling Points</div>
<div class="mb" style="top:344px">Real Filling</div>
<div class="mb" style="top:366px">Suction Points</div>
<div class="mb" style="top:388px">5 Positions</div>
<div class="mb" style="top:410px">Gravity Center</div>
<div class="mb" style="top:432px">Perim2curves</div>
<div class="mb" style="top:454px">Tank Info</div>
<div class="mb" style="top:476px">SPH</div>

<!-- LEFT STRIP -->
<div class="abs" style="left:0;top:106px;width:16px;height:632px;border-right:1px solid #fff;border-bottom:1px solid #fff;border-left:1px solid #aca899"></div>
<div class="abs" style="left:1px;top:317px;width:15px;height:6px;background:#fff;border-radius:2px"></div>
<div class="abs" style="left:2px;top:319px;width:13px;height:2px;background:#000;border-radius:1px"></div>
<div class="abs" style="left:0px;top:324px;width:16px;height:1px;background:#aca899"></div>
<div class="abs" style="left:0px;top:325px;width:16px;height:1px;background:#fff"></div>
<div class="abs" style="left:1px;top:519px;width:15px;height:6px;background:#fff;border-radius:2px"></div>
<div class="abs" style="left:2px;top:521px;width:13px;height:2px;background:#000;border-radius:1px"></div>
<div class="abs" style="left:0px;top:526px;width:16px;height:1px;background:#aca899"></div>
<div class="abs" style="left:0px;top:527px;width:16px;height:1px;background:#fff"></div>

<!-- H SEPARATOR -->
<div class="abs" style="left:0;top:745px;width:1440px;height:1px;background:#aca899"></div>
<div class="abs" style="left:0;top:746px;width:1440px;height:2px;background:#fff"></div>
<div class="abs" style="left:0;top:748px;width:1440px;height:1px;background:#b4b2a6"></div>
<div class="abs" style="left:0;top:750px;width:1440px;height:1px;background:#fff"></div>
<div class="abs" style="left:1421px;top:742px;width:7px;height:7px;background:#c0c0c0;border-left:1px solid #fff;border-right:1px solid #aca899"></div>

<!-- ANSA INFO -->
<div class="abs" style="left:2px;top:752px;width:14px;height:117px;background:linear-gradient(to bottom,#4293f9 0%,#1d6eef 50%,#0a5de6 100%)"></div>
<svg class="abs" style="left:4px;top:754px" width="10" height="10"><rect width="10" height="10" fill="#c8c8c8"/><path d="M0 0H10V10" fill="none" stroke="#aca899"/><path d="M2 2 L8 8 M8 2 L2 8" stroke="#000" stroke-width="1.7"/></svg>
<div class="t" style="left:10px;top:867px;color:#fff;transform-origin:0 0;transform:rotate(-90deg) translate(0,-8px)">Ansa Info</div>
<div class="abs" style="left:20px;top:752px;width:548px;height:113px;border:1px solid;border-color:#aca899 #fff #fff #aca899"></div>
<div class="abs" style="left:21px;top:753px;width:546px;height:111px;border:1px solid;border-color:#aca899 #e8e8e8 #e8e8e8 #aca899"></div>
<div class="abs" style="left:22px;top:754px;width:532px;height:97px;background:#fff;overflow:hidden">
<div class="t" style="left:5px;top:-2px;line-height:14px;height:auto">HOST :
USER : POLYMONT
DATE :7–DEC–2010  12:31:05

 Error !!.
 There are triple or single Boundaries
 Problems MUST be fixed before continue  !!</div>
</div>
<!-- v scrollbar -->
<div class="abs" style="left:554px;top:754px;width:12px;height:97px;background:#aca899"></div>
<svg class="abs" style="left:554px;top:754px" width="12" height="97">
  <path d="M6 1 L1 11 H11 Z" fill="#c4c4c4" stroke="#d8d8d0" stroke-width="0.8"/>
  <rect x="0.5" y="66.5" width="11" height="18" fill="#c0c0c0" stroke="#d6d6d0"/>
  <path d="M6 96 L1 86 H11 Z" fill="#c4c4c4" stroke="#d8d8d0" stroke-width="0.8"/>
</svg>
<!-- h scrollbar -->
<div class="abs" style="left:22px;top:851px;width:532px;height:12px;background:#aca899"></div>
<div class="abs" style="left:554px;top:851px;width:12px;height:12px;background:#fff"></div>
<svg class="abs" style="left:22px;top:851px" width="532" height="12">
  <path d="M1 6 L11 1 V11 Z" fill="#c4c4c4" stroke="#d8d8d0" stroke-width="0.8"/>
  <rect x="12.5" y="0.5" width="355" height="11" fill="#c0c0c0" stroke="#d6d6d0"/>
  <path d="M531 6 L521 1 V11 Z" fill="#c4c4c4" stroke="#d8d8d0" stroke-width="0.8"/>
</svg>

<!-- V SPLITTER -->
<div class="abs" style="left:571px;top:751px;width:1px;height:119px;background:#aca899"></div>
<div class="abs" style="left:572px;top:751px;width:2px;height:119px;background:#fff"></div>
<div class="abs" style="left:575px;top:751px;width:1px;height:119px;background:#aca899"></div>
<div class="abs" style="left:576px;top:751px;width:1px;height:119px;background:#fff"></div>
<div class="abs" style="left:571px;top:759px;width:6px;height:7px;background:#c0c0c0;border-top:1px solid #fff;border-bottom:1px solid #aca899"></div>

<!-- GENERAL BUT -->
<div class="abs" style="left:579px;top:752px;width:14px;height:117px;background:linear-gradient(to bottom,#4293f9 0%,#1d6eef 50%,#0a5de6 100%)"></div>
<svg class="abs" style="left:581px;top:754px" width="10" height="10"><rect width="10" height="10" fill="#c8c8c8"/><path d="M0 0H10V10" fill="none" stroke="#aca899"/><path d="M2 2 L8 8 M8 2 L2 8" stroke="#000" stroke-width="1.7"/></svg>
<div class="t" style="left:587px;top:868px;color:#fff;transform-origin:0 0;transform:rotate(-90deg) translate(0,-8px)">General But..</div>

<!-- BOTTOM BUTTON GROUPS -->
<div class="abs" style="left:889px;top:752px;width:251px;height:46px;border:1px solid;border-color:#aca899 #fff #fff #aca899"></div>
<div class="abs" style="left:890px;top:753px;width:249px;height:44px;border:1px solid;border-color:#fff #aca899 #aca899 #fff"></div>
<div class="t" style="left:893px;top:757px;font-weight:bold;letter-spacing:0.6px">Gravity..</div>
<div class="cell" style="left:892px;top:775px;width:82px;height:20px;background:#a9a798;border-color:#a09e90 #fff #fff #a09e90;"></div>
<div class="cb red" style="left:894px;top:781px"></div>
<div class="t dis" style="left:914px;top:778px">Liquid</div>
<div class="cell" style="left:974px;top:755px;width:82px;height:20px;"></div>
<div class="cb" style="left:976px;top:761px"></div>
<div class="t dis" style="left:988px;top:758px">Combined</div>
<div class="cell" style="left:1056px;top:755px;width:82px;height:20px;"></div>
<div class="cb" style="left:1058px;top:761px"></div>
<div class="t dis" style="left:1074px;top:758px">V= f{Y}</div>
<div class="cell" style="left:974px;top:775px;width:82px;height:20px;"></div>
<div class="cb" style="left:976px;top:781px"></div>
<div class="t dis" style="left:992px;top:778px">V= f{X}</div>
<div class="cell" style="left:1056px;top:775px;width:82px;height:20px;"></div>
<div class="cb" style="left:1058px;top:781px"></div>
<div class="t dis" style="left:1074px;top:778px">V= f{Z}</div>
<div class="abs" style="left:1141px;top:752px;width:295px;height:46px;border:1px solid;border-color:#aca899 #fff #fff #aca899"></div>
<div class="abs" style="left:1142px;top:753px;width:293px;height:44px;border:1px solid;border-color:#fff #aca899 #aca899 #fff"></div>
<div class="t" style="left:1153px;top:757px;font-weight:bold;letter-spacing:0.8px">VISIB.</div>
<div class="cell" style="left:1144px;top:775px;width:73px;height:20px;background:#a9a798;border-color:#a09e90 #fff #fff #a09e90;"></div>
<div class="cb red" style="left:1146px;top:781px"></div>
<div class="t" style="left:1169px;top:778px">WIRE</div>
<div class="cell" style="left:1217px;top:755px;width:72px;height:20px;"></div>
<div class="cb" style="left:1219px;top:761px"></div>
<div class="t" style="left:1234px;top:758px">HIDDEN</div>
<div class="cell" style="left:1289px;top:755px;width:73px;height:20px;"></div>
<div class="cb" style="left:1291px;top:761px"></div>
<div class="t dis" style="left:1302px;top:758px">Thick..</div>
<div class="cell" style="left:1362px;top:755px;width:72px;height:20px;"></div>
<div class="cb" style="left:1364px;top:761px"></div>
<div class="t" style="left:1379px;top:758px">NumInp</div>
<div class="cell" style="left:1217px;top:775px;width:72px;height:20px;"></div>
<div class="cb" style="left:1219px;top:781px"></div>
<div class="t" style="left:1234px;top:778px">SHADOW</div>
<div class="cell" style="left:1289px;top:775px;width:73px;height:20px;"></div>
<div class="cb" style="left:1291px;top:781px"></div>
<div class="t" style="left:1310px;top:778px">LOCAL</div>
<div class="cell" style="left:1362px;top:775px;width:72px;height:20px;"></div>
<div class="t dis" style="left:1379px;top:778px">TANK</div>
<svg class="abs" style="left:1425px;top:780px" width="7" height="10"><path d="M1 1 L6 5 L1 9 Z" fill="#8a8a8a"/></svg>
</div>
</body>
</html>
